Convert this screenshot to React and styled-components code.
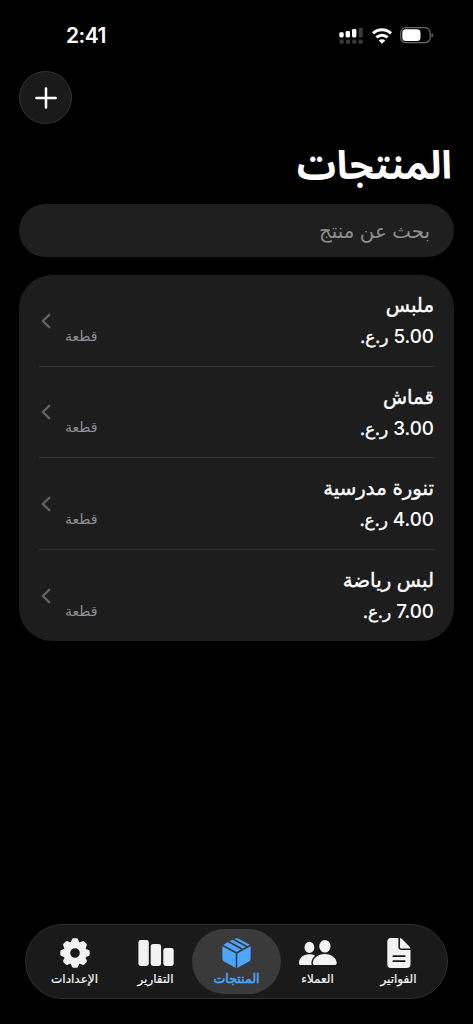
import styled, { createGlobalStyle } from "styled-components";

const GlobalStyle = createGlobalStyle`
  * {
    box-sizing: border-box;
  }

  body {
    margin: 0;
    background: #000;
    font-family: Inter, "DejaVu Sans", sans-serif;
    color: #fff;
  }
`;

const Screen = styled.div`
  display: flex;
  flex-direction: column;
  width: 473px;
  height: 1024px;
  overflow: hidden;
  background: #000;
`;

const StatusBar = styled.div`
  display: flex;
  direction: ltr;
  justify-content: space-between;
  align-items: center;
  height: 71px;
  padding: 0 39px 0 66px;
`;

const Time = styled.span`
  font-size: 21px;
  font-weight: 600;
  letter-spacing: -0.5px;
`;

const StatusIcons = styled.div`
  display: flex;
  align-items: center;
  gap: 8px;
`;

const Header = styled.header`
  display: flex;
  justify-content: flex-end;
  padding: 0 19px;
`;

const AddButton = styled.button`
  display: flex;
  align-items: center;
  justify-content: center;
  width: 53px;
  height: 53px;
  padding: 0;
  border: 1px solid #343434;
  border-radius: 50%;
  background: #1a1a1a;
`;

const Title = styled.h1`
  height: 80px;
  margin: 0;
  padding: 0 21px;
  font-family: Inter, "Noto Sans Arabic", "DejaVu Sans", sans-serif;
  font-size: 39px;
  font-weight: 700;
  line-height: 82px;
  white-space: nowrap;
`;

const Search = styled.input`
  flex-shrink: 0;
  height: 53px;
  margin: 0 19px;
  padding: 0 24px;
  border: none;
  border-radius: 27px;
  outline: none;
  background: #1f1f1f;
  color: #fff;
  font-family: inherit;
  font-size: 19.8px;

  &::placeholder {
    color: #8e8e8e;
    opacity: 1;
  }
`;

const List = styled.ul`
  flex-shrink: 0;
  margin: 18px 19px 0;
  padding: 0 20px;
  border-radius: 33px;
  background: #1d1d1d;
  list-style: none;
`;

const Row = styled.li`
  display: flex;
  justify-content: space-between;
  height: 91.6px;
  border-bottom: 1px solid #333335;

  &:last-child {
    border-bottom: none;
  }
`;

const Info = styled.div`
  display: flex;
  flex-direction: column;
  padding-top: 15px;
`;

const Name = styled.span`
  height: 31px;
  font-size: 19.8px;
  line-height: 31px;
  white-space: nowrap;
  -webkit-text-stroke: 0.4px #fff;
`;

const Price = styled.span`
  height: 31px;
  font-size: 18.8px;
  font-weight: 500;
  line-height: 31px;
  white-space: nowrap;
`;

const Currency = styled.span`
  font-size: 17px;
  font-weight: 400;
  -webkit-text-stroke: 0.4px #fff;
`;

const Side = styled.div`
  display: flex;
  align-items: center;
  gap: 14px;
  padding: 1px 0 0 2px;
`;

const Unit = styled.span`
  padding-top: 30px;
  color: #8e8e93;
  font-size: 14px;
  line-height: 20px;
`;

const TabBar = styled.nav`
  display: flex;
  flex-shrink: 0;
  align-items: center;
  justify-content: center;
  height: 75px;
  margin: auto 25px 25px;
  border: 1px solid #303030;
  border-radius: 38px;
  background: #1a1a1a;
`;

const Tab = styled.button`
  display: flex;
  flex-direction: column;
  align-items: center;
  width: ${(props) => (props.$active ? "89px" : "81px")};
  height: 65px;
  margin: ${(props) => (props.$active ? "0 -4px" : "0")};
  padding: 8px 0 0;
  border: none;
  border-radius: 33px;
  background: ${(props) => (props.$active ? "#3a3a3a" : "transparent")};
  color: ${(props) => (props.$active ? "#4da6ff" : "#f2f2f2")};
  font-family: inherit;
`;

const TabLabel = styled.span`
  font-size: ${(props) => (props.$active ? "12.6px" : "12px")};
  line-height: 19px;
  white-space: nowrap;
  -webkit-text-stroke: ${(props) => (props.$active ? "0.5px" : "0.2px")} currentColor;
`;

const SignalIcon = () => (
  <svg width="25" height="18" viewBox="0 0 25 18">
    <g fill="#fff">
      <rect x="0.3" y="5.3" width="4.4" height="5.2" rx="1.4" />
      <rect x="6.6" y="4" width="4.4" height="6.500" rx="1.4" />
      <rect x="13" y="2" width="4.4" height="8.5" rx="1.4" />
    </g>
    <g fill="#3a3a3a">
      <rect x="19.6" y="0.5" width="4.2" height="10" rx="1.4" />
      <rect x="0.5" y="12.4" width="4.2" height="4.4" rx="1.4" />
      <rect x="6.8" y="12.4" width="4.2" height="4.4" rx="1.4" />
      <rect x="13.2" y="12.4" width="4.2" height="4.4" rx="1.4" />
      <rect x="19.6" y="12.4" width="4.2" height="4.4" rx="1.4" />
    </g>
  </svg>
);

const WifiIcon = () => (
  <svg width="20" height="16" viewBox="0 0 20 16">
    <g fill="none" stroke="#fff" strokeWidth="3">
      <path d="M1 5.4a13 13 0 0 1 18 0" />
      <path d="M4.4 9.4a8.1 8.1 0 0 1 11.2 0" />
    </g>
    <path d="M10 15.8l-3.3-3.3a4.7 4.7 0 0 1 6.6 0z" fill="#fff" />
  </svg>
);

const BatteryIcon = () => (
  <svg width="34" height="17" viewBox="0 0 34 17">
    <rect x="0.7" y="0.7" width="29.4" height="15" rx="5" fill="none" stroke="#6a6a6a" strokeWidth="1.2" />
    <rect x="2.3" y="2.3" width="18.2" height="11.8" rx="3.6" fill="#fff" />
    <path d="M31.5 6v4.6c.9-.4 1.6-1.3 1.6-2.3S32.4 6.4 31.5 6z" fill="#6a6a6a" />
  </svg>
);

const PlusIcon = () => (
  <svg width="22" height="22" viewBox="0 0 22 22" stroke="#fff" strokeWidth="2.5" strokeLinecap="round">
    <path d="M11 1.4v19.2M1.4 11h19.2" />
  </svg>
);

const ChevronIcon = () => (
  <svg width="10" height="16" viewBox="0 0 10 16" fill="none" stroke="#626266" strokeWidth="2.3" strokeLinecap="round" strokeLinejoin="round">
    <path d="M8.2 1.8L1.8 8l6.4 6.2" />
  </svg>
);

const DocumentIcon = () => (
  <svg width="24" height="32" viewBox="0 0 24 32">
    <path d="M3.8 1H11.4V9.8Q11.4 13 14.6 13H23.5V27.2Q23.5 31 19.7 31H3.8Q0.3 31 0.3 27.2V4.8Q0.3 1 3.8 1z" fill="currentColor" />
    <path d="M13 1.1Q14.2 1.3 15 2.1L22.400 9.5Q23.2 10.300 23.400 11.500H14.200Q13 11.500 13 10.300z" fill="currentColor" />
    <path d="M6.3 19.2h11.4M6.3 24.2h11.4" stroke="#1a1a1a" strokeWidth="1.8" strokeLinecap="round" />
  </svg>
);

const PeopleIcon = () => (
  <svg width="38" height="32" viewBox="0 0 38 32" fill="currentColor">
    <ellipse cx="10.4" cy="10.4" rx="4.9" ry="5.6" />
    <path d="M0 26C0 21.300 4.200 17.300 10.200 17.300c2.300 0 4.300.5 5.900 1.400-2.300 1.800-3.700 4.600-3.700 7.300 0 .8 0 1.400.4 2H2.200C.7 28 0 27.500 0 26z" />
    <ellipse cx="25.9" cy="9.2" rx="5.600" ry="6.300" />
    <path d="M13.800 26c0-4.300 4.800-9 12-9s11.900 4.700 11.900 9c0 1.400-.8 2-2.400 2H16.200c-1.600 0-2.400-.6-2.400-2z" />
  </svg>
);

const BoxIcon = () => (
  <svg width="29" height="32" viewBox="0 0 29 32" fill="currentColor">
    <path d="M0.4 9.3L13.7 16.5V31L2.1 24.6Q0.4 23.7 0.4 21.8z" />
    <path d="M28.6 9.3L15.3 16.5V31L26.9 24.6Q28.6 23.7 28.6 21.8z" />
    <path d="M1.2 7.8L5.8 5.3 19 12.5 14.5 14.9z" />
    <path d="M7.6 4.3L10.5 2.7 23.8 9.9 20.8 11.5z" />
    <path d="M12.2 1.8Q14.5 .5 16.8 1.8L27.8 7.8 25.5 9z" />
  </svg>
);

const BarsIcon = () => (
  <svg width="36" height="32" viewBox="0 0 36 32" fill="currentColor">
    <rect x="0.4" y="3" width="10.4" height="26" rx="2.4" />
    <rect x="12.7" y="7" width="10.4" height="22" rx="2.4" />
    <rect x="25.3" y="11" width="10.4" height="18" rx="2.4" />
  </svg>
);

const GearIcon = () => (
  <svg width="30" height="32" viewBox="-15 -16 30 32" fill="currentColor">
    <path
      fillRule="evenodd"
      d="M0-11.6A11.6 11.6 0 1 1 0 11.6 11.6 11.6 0 1 1 0-11.6zM0-4.8A4.8 4.8 0 1 0 0 4.8 4.8 4.8 0 1 0 0-4.8z"
    />
    {[0, 45, 90, 135, 180, 225, 270, 315].map((angle) => (
      <path
        key={angle}
        transform={`rotate(${angle})`}
        d="M-4.3-10.5L-3.1-13.5Q-2.7-14.700-1.600-14.700H1.600Q2.700-14.700 3.100-13.5L4.3-10.5z"
      />
    ))}
  </svg>
);

const products = [
  { name: "ملبس", price: "5.00" },
  { name: "قماش", price: "3.00" },
  { name: "تنورة مدرسية", price: "4.00" },
  { name: "لبس رياضة", price: "7.00" },
];

const tabs = [
  { label: "الفواتير", Icon: DocumentIcon },
  { label: "العملاء", Icon: PeopleIcon },
  { label: "المنتجات", Icon: BoxIcon, active: true },
  { label: "التقارير", Icon: BarsIcon },
  { label: "الإعدادات", Icon: GearIcon },
];

const App = () => {
  return (
    <>
      <GlobalStyle />
      <Screen dir="rtl">
        <StatusBar>
          <Time>2:41</Time>
          <StatusIcons>
            <SignalIcon />
            <WifiIcon />
            <BatteryIcon />
          </StatusIcons>
        </StatusBar>
        <Header>
          <AddButton type="button">
            <PlusIcon />
          </AddButton>
        </Header>
        <Title>المنتجات</Title>
        <Search type="text" placeholder="بحث عن منتج" />
        <List>
          {products.map((product) => (
            <Row key={product.name}>
              <Info>
                <Name>{product.name}</Name>
                <Price>
                  {product.price} <Currency>ر.ع.</Currency>
                </Price>
              </Info>
              <Side>
                <Unit>قطعة</Unit>
                <ChevronIcon />
              </Side>
            </Row>
          ))}
        </List>
        <TabBar>
          {tabs.map(({ label, Icon, active }) => (
            <Tab key={label} type="button" $active={active}>
              <Icon />
              <TabLabel $active={active}>{label}</TabLabel>
            </Tab>
          ))}
        </TabBar>
      </Screen>
    </>
  );
};

export default App;
